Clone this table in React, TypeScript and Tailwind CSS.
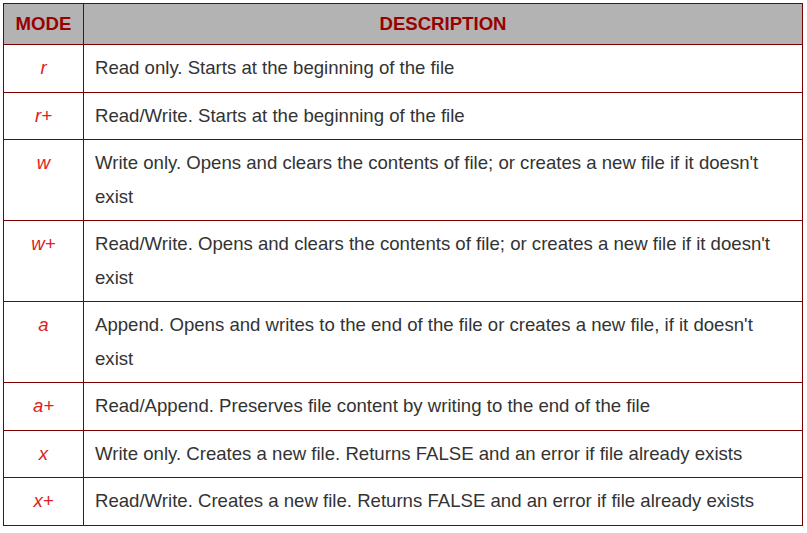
import React from 'react';

const rows: { mode: string; desc: string }[] = [
  { mode: 'r', desc: 'Read only. Starts at the beginning of the file' },
  { mode: 'r+', desc: 'Read/Write. Starts at the beginning of the file' },
  { mode: 'w', desc: "Write only. Opens and clears the contents of file; or creates a new file if it doesn't exist" },
  { mode: 'w+', desc: "Read/Write. Opens and clears the contents of file; or creates a new file if it doesn't exist" },
  { mode: 'a', desc: "Append. Opens and writes to the end of the file or creates a new file, if it doesn't exist" },
  { mode: 'a+', desc: 'Read/Append. Preserves file content by writing to the end of the file' },
  { mode: 'x', desc: 'Write only. Creates a new file. Returns FALSE and an error if file already exists' },
  { mode: 'x+', desc: 'Read/Write. Creates a new file. Returns FALSE and an error if file already exists' },
];

export default function App() {
  return (
    <div className="w-[807px] h-[533px] bg-white pt-[3px] pl-[3px]" style={{ fontFamily: '"Liberation Sans", Arial, sans-serif' }}>
      <table className="w-[800px] border-collapse border border-[#7a0000] text-[18.6px]">
        <thead>
          <tr className="bg-[#b3b3b3] h-[41px]">
            <th className="w-[80px] border border-[#7a0000] text-[#990000] font-bold text-center">MODE</th>
            <th className="border border-[#7a0000] text-[#990000] font-bold text-center">DESCRIPTION</th>
          </tr>
        </thead>
        <tbody>
          {rows.map((row) => (
            <tr key={row.mode}>
              <td className="border border-[#7a0000] text-center align-top italic text-[#e0201b] leading-[33.5px] pt-[6px] pb-[7px]">
                {row.mode}
              </td>
              <td className="border border-[#7a0000] align-top text-[#333333] leading-[33.5px] pt-[6px] pb-[7px] pl-[11px] pr-[25px]">
                {row.desc}
              </td>
            </tr>
          ))}
        </tbody>
      </table>
    </div>
  );
}
